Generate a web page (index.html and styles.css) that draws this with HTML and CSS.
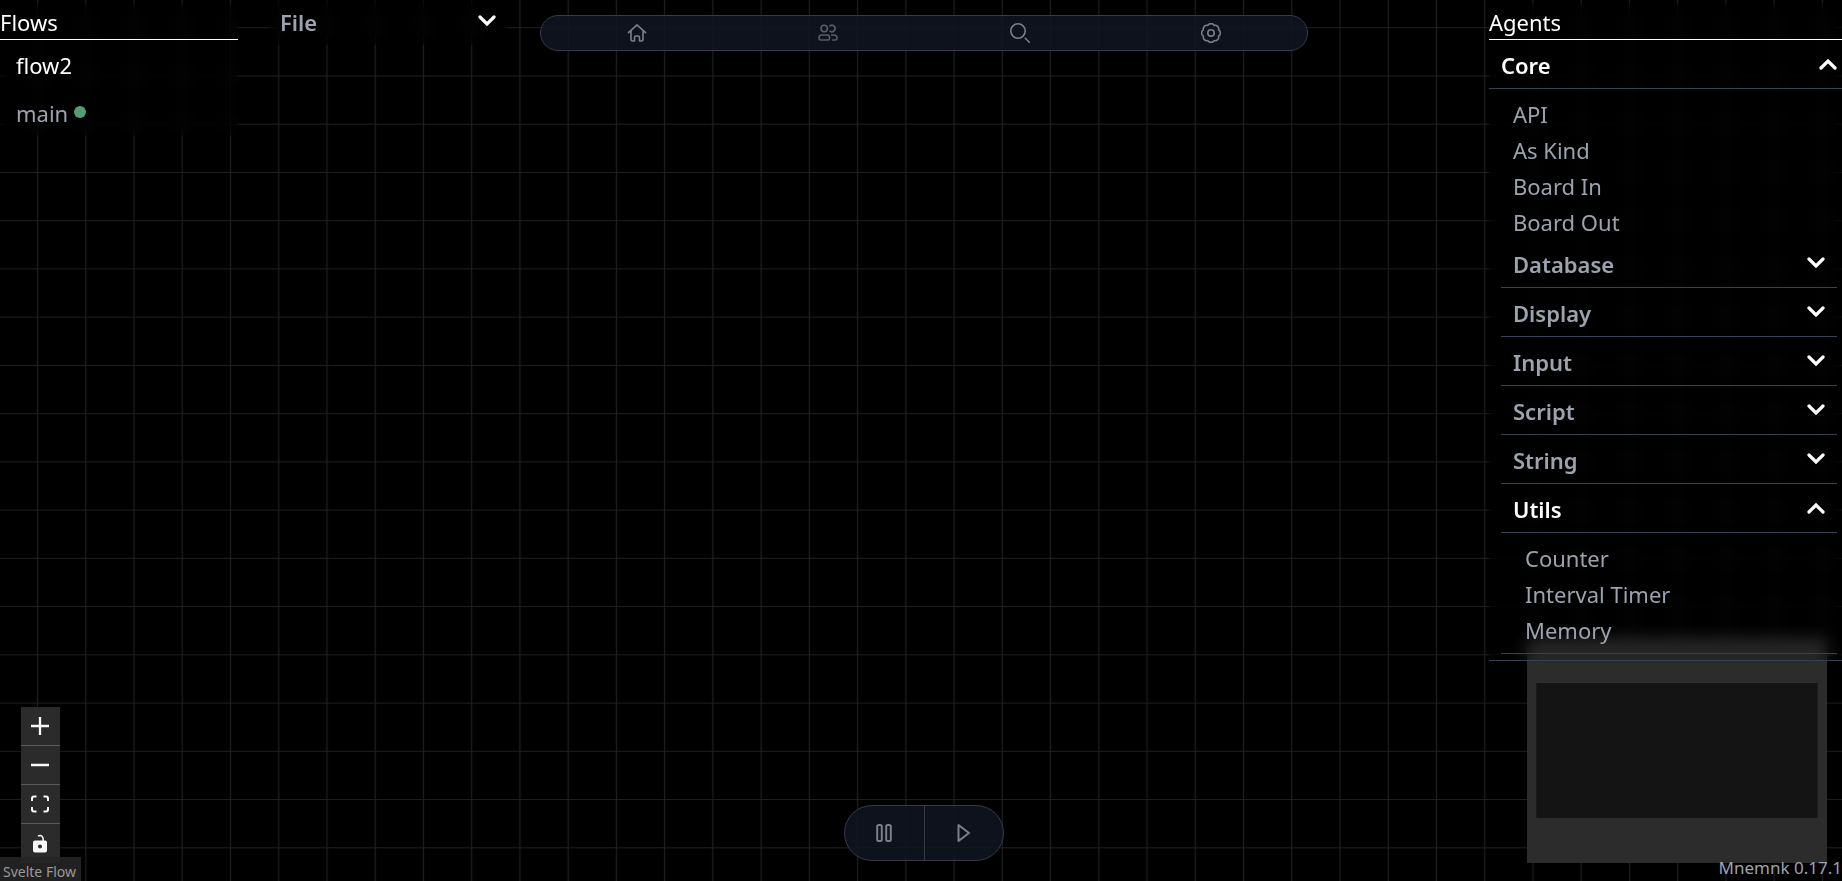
FILE: index.html
```html
<!DOCTYPE html>
<html lang="en">
<head>
<meta charset="utf-8">
<title>Mnemnk</title>
<link rel="stylesheet" href="styles.css">
</head>
<body>
<svg class="symbols" aria-hidden="true">
  <symbol id="down" viewBox="0 0 18 12"><path d="M2 2l7 7 7-7" fill="none" stroke="currentColor" stroke-width="3.2" stroke-linecap="round"/></symbol>
  <symbol id="up" viewBox="0 0 18 12"><path d="M2 10l7-7 7 7" fill="none" stroke="currentColor" stroke-width="3.2" stroke-linecap="round"/></symbol>
</svg>
<div class="app">
  <svg class="grid" aria-hidden="true">
    <defs>
      <pattern id="cells" x="13.4" y="3.6" width="48.24" height="48.24" patternUnits="userSpaceOnUse">
        <path d="M24.12 0V48.24M0 24.12H48.24" stroke="#1f1f1f" stroke-width="1.2"/>
      </pattern>
    </defs>
    <rect width="100%" height="100%" fill="url(#cells)"/>
  </svg>

  <div class="controls">
    <button type="button" aria-label="Zoom in"><svg width="18" height="18" viewBox="0 0 18 18"><path d="M9 0v18M0 9h18" stroke="currentColor" stroke-width="2.3"/></svg></button>
    <button type="button" aria-label="Zoom out"><svg width="18" height="18" viewBox="0 0 18 18"><path d="M0 9h18" stroke="currentColor" stroke-width="2.5"/></svg></button>
    <button type="button" aria-label="Fit view"><svg width="18" height="18" viewBox="0 0 18 18"><path d="M1 6V3.500Q1 1.500 3 1.500H5.500M12.500 1.500H15Q17 1.500 17 3.500V6M17 12v2.500Q17 16.500 15 16.500H12.500M5.500 16.500H3Q1 16.500 1 14.500V12" fill="none" stroke="currentColor" stroke-width="2"/></svg></button>
    <button type="button" aria-label="Toggle interactivity"><svg width="18" height="20" viewBox="0 0 18 20"><path d="M7 2.300Q9 .6 11 2.300Q12.300 3.500 12.300 7" fill="none" stroke="currentColor" stroke-width="1.500"/><path fill="currentColor" fill-rule="evenodd" d="M4 6.500H14Q16 6.500 16 8.500V16.500Q16 18.500 14 18.500H4Q2 18.500 2 16.500V8.500Q2 6.500 4 6.500ZM9 10.500a2 2 0 1 0 0 4a2 2 0 1 0 0-4Z"/></svg></button>
  </div>
  <a class="attribution" href="#">Svelte Flow</a>
  <div class="minimap"><div class="minimap-view"></div></div>

  <div class="overlay">
    <nav class="flows">
      <h2 class="title">Flows</h2>
      <a class="flow current" href="#">flow2</a>
      <a class="flow" href="#">main<span class="dot"></span></a>
    </nav>

    <button type="button" class="file head">File<svg class="chev"><use href="#down"/></svg></button>

    <nav class="bar">
      <button type="button" aria-label="Home"><svg width="20" height="20" viewBox="0 0 20 20"><path d="M1.500 9.600 10 1.800l8.500 7.800M4 8v8.300q0 1.700 1.700 1.700H7.500V14.500q0-1.500 1.500-1.500h2q1.500 0 1.500 1.500V18h1.800q1.700 0 1.700-1.700V8"/></svg></button>
      <button type="button" aria-label="Agents" class="dim"><svg width="20" height="20" viewBox="0 0 20 20"><circle cx="6.200" cy="5.500" r="3.200"/><path d="M12 2.900a3.200 3.200 0 1 1 0 5.200M3.800 12h5.400q2.300 0 2.300 2.500v1q0 1.500-1.500 1.500H2.500Q1 17 1 15.500v-1Q1 12 3.800 12zM13.500 12h2.200q3.300 0 3.300 3v.5q0 1.500-1.500 1.500h-3"/></svg></button>
      <button type="button" aria-label="Search"><svg width="20" height="20" viewBox="0 0 20 20"><circle cx="8" cy="8" r="7.200"/><path d="M15.300 15.300l4 4"/></svg></button>
      <button type="button" aria-label="Settings"><svg width="20" height="20" viewBox="0 0 20 20"><circle cx="10" cy="10" r="3.200"/><path d="M6.860 2.420A3.600 3.600 0 0 1 13.140 2.420A3.600 3.600 0 0 1 17.580 6.860A3.600 3.600 0 0 1 17.580 13.140A3.600 3.600 0 0 1 13.140 17.580A3.600 3.600 0 0 1 6.860 17.580A3.600 3.600 0 0 1 2.420 13.140A3.600 3.600 0 0 1 2.420 6.860A3.600 3.600 0 0 1 6.860 2.420Z"/></svg></button>
    </nav>

    <aside class="agents">
      <h2 class="title">Agents</h2>
      <button type="button" class="head core open">Core<svg class="chev"><use href="#up"/></svg></button>
      <div class="group">
        <ul class="items">
          <li>API</li>
          <li>As Kind</li>
          <li>Board In</li>
          <li>Board Out</li>
        </ul>
        <button type="button" class="head">Database<svg class="chev"><use href="#down"/></svg></button>
        <button type="button" class="head">Display<svg class="chev"><use href="#down"/></svg></button>
        <button type="button" class="head">Input<svg class="chev"><use href="#down"/></svg></button>
        <button type="button" class="head">Script<svg class="chev"><use href="#down"/></svg></button>
        <button type="button" class="head">String<svg class="chev"><use href="#down"/></svg></button>
        <button type="button" class="head open">Utils<svg class="chev"><use href="#up"/></svg></button>
        <ul class="items nested">
          <li>Counter</li>
          <li>Interval Timer</li>
          <li>Memory</li>
        </ul>
      </div>
    </aside>

    <div class="player">
      <button type="button" aria-label="Pause"><svg width="20" height="20" viewBox="0 0 20 20"><rect x="3.200" y="2" width="4.600" height="16" rx="1.500"/><rect x="12.200" y="2" width="4.600" height="16" rx="1.500"/></svg></button>
      <button type="button" aria-label="Play"><svg width="20" height="20" viewBox="0 0 20 20"><path d="M4.500 2v16L15 10z"/></svg></button>
    </div>
  </div>
  <div class="version">Mnemnk 0.17.1</div>
</div>
</body>
</html>
```
FILE: styles.css
```css
* {
  box-sizing: border-box;
}

body {
  margin: 0;
  background: #000;
  color: #9ca3af;
  font: 22px/36px "Segoe UI", "Noto Sans", sans-serif;
}

button {
  margin: 0;
  padding: 0;
  border: 0;
  background: none;
  color: inherit;
  font: inherit;
  cursor: pointer;
}

a {
  color: inherit;
  text-decoration: none;
}

ul {
  margin: 0;
  padding: 0;
  list-style: none;
}

.symbols {
  position: absolute;
  width: 0;
  height: 0;
}

.app {
  position: relative;
  height: 100vh;
  overflow: hidden;
}

.grid {
  position: absolute;
  inset: 0;
  width: 100%;
  height: 100%;
}

/* Panels float over the canvas */
.overlay {
  position: absolute;
  inset: 0 -6px 0 0;
}

.flows,
.agents,
.file {
  position: absolute;
  background: rgba(0, 0, 0, 0.1);
  backdrop-filter: blur(8px);
}

.flows {
  top: 3px;
  left: 0;
  width: 238px;
}

.title {
  margin: 0;
  padding-top: 2px;
  border-bottom: 1px solid #fff;
  color: #fff;
  font-size: 22px;
  line-height: 34px;
  font-weight: 400;
}

.flow {
  display: flex;
  align-items: center;
  gap: 6px;
  padding: 7px 16px 5px;
}

.current {
  color: #fff;
}

.dot {
  width: 12px;
  height: 12px;
  margin-bottom: 2px;
  border-radius: 50%;
  background: #559d71;
}

.head {
  display: flex;
  align-items: center;
  justify-content: space-between;
  width: 100%;
  padding: 7px 12px 5px;
  border-bottom: 1px solid #374151;
  font-weight: 600;
}

.open {
  color: #fff;
}

.chev {
  width: 18px;
  height: 12px;
  margin-bottom: 2px;
  color: #fff;
}

.file {
  top: 0;
  left: 268px;
  width: 240px;
  padding: 4px 12px 5px;
  border: 0;
}

.agents {
  top: 3px;
  right: 0;
  width: 359px;
}

.core {
  padding-right: 11px;
}

.group {
  padding: 0 11px 6px 12px;
  border-bottom: 1px solid #374151;
}

.items {
  padding: 6px 12px 0;
}

.items li {
  padding-top: 2px;
  line-height: 34px;
}

.nested {
  padding: 6px 24px;
  border-bottom: 1px solid #374151;
}

.bar,
.player {
  position: absolute;
  left: 50%;
  display: flex;
  transform: translateX(-50%);
  border: 1px solid #373a46;
  background: rgba(17, 21, 33, 0.85);
  overflow: hidden;
}

.bar {
  top: 15px;
  width: 768px;
  height: 36px;
  border-radius: 18px;
}

.player {
  bottom: 20px;
  width: 160px;
  height: 56px;
  border-radius: 28px;
}

.bar button,
.player button {
  display: flex;
  flex: 1;
  align-items: center;
  justify-content: center;
}

.player button + button {
  border-left: 1px solid #373a46;
}

.bar svg,
.player svg {
  fill: none;
  stroke: #7c7f89;
  stroke-width: 1.6;
  stroke-linejoin: round;
  stroke-linecap: round;
}

.player svg {
  stroke-width: 2;
}

.bar .dim svg {
  stroke: #595c68;
}

.controls {
  position: absolute;
  bottom: 18px;
  left: 21px;
  z-index: 1;
  width: 39px;
}

.controls button {
  display: flex;
  align-items: center;
  justify-content: center;
  width: 100%;
  height: 39px;
  padding-right: 1px;
  border-bottom: 1px solid #5b5b5b;
  background: #2b2b2b;
  color: #f8f8f8;
}

.controls button:last-child {
  border-bottom: 0;
}

.attribution {
  position: absolute;
  bottom: 0;
  left: 0;
  z-index: 2;
  padding: 5px 5px 0 3px;
  background: rgba(37, 37, 37, 0.9);
  color: #999;
  font-size: 14px;
  line-height: 19px;
}

.minimap {
  position: absolute;
  right: 15px;
  bottom: 18px;
  width: 300px;
  height: 225px;
  padding: 45px 9px;
  background: #2c2c2c;
}

.minimap-view {
  height: 100%;
  border: solid #1c1c1c;
  border-width: 0 1px;
  background: #141414;
}

.version {
  position: absolute;
  right: 0;
  bottom: 0;
  font-size: 17px;
  line-height: 26px;
}
```
